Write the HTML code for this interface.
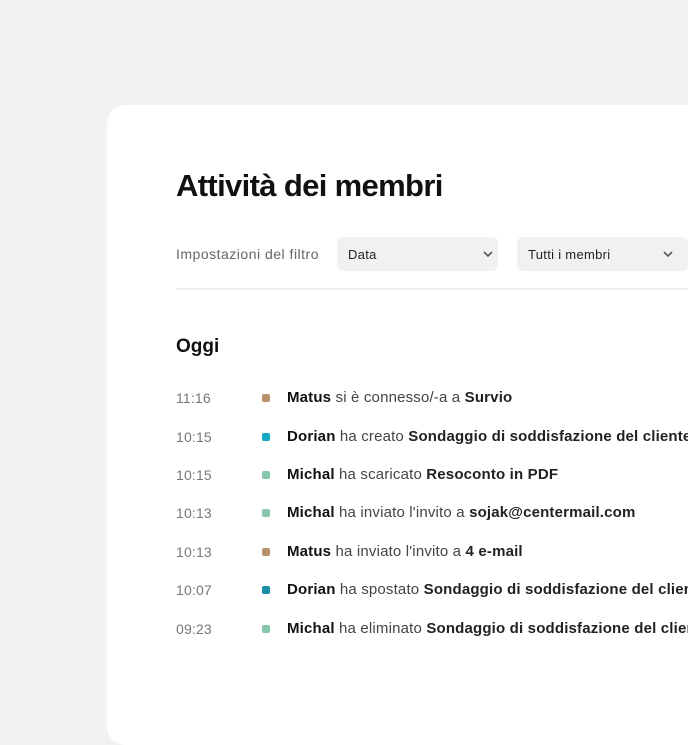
<!DOCTYPE html>
<html><head><meta charset="utf-8"><style>
body{margin:0;width:688px;height:688px;background:#f1f2f1;overflow:hidden;font-family:"Liberation Sans",Arial,sans-serif;position:relative}
.card{position:absolute;left:107px;top:105px;width:620px;height:640px;background:#fff;border-radius:18px}
h1{position:absolute;left:176px;top:168px;margin:0;font-size:31px;font-weight:700;color:#111;letter-spacing:-0.65px;white-space:nowrap}
.lbl{position:absolute;left:176px;top:246px;font-size:14px;color:#666;letter-spacing:0.5px}
.sel{position:absolute;top:237px;height:34px;background:#f1f1f1;border-radius:6px;font-size:13px;color:#222;line-height:36px;padding-left:11px;box-sizing:border-box;letter-spacing:0.3px}
.sel svg{position:absolute;top:14px}
.hr{position:absolute;left:176px;top:288px;width:520px;height:2px;background:#ececec}
.oggi{position:absolute;left:176px;top:336px;font-size:19px;font-weight:700;color:#111}
.row{position:absolute;left:176px;font-size:15px;color:#444;white-space:nowrap;letter-spacing:0.17px}
.row .t{position:absolute;left:0;top:1px;font-size:14px;color:#777}
.row .d{position:absolute;left:86px;top:5px;width:8px;height:8px;border-radius:2px}
.row .x{position:absolute;left:111px;top:0}
b{color:#222}
.row b:first-child{color:#111}
</style></head><body>
<div class="card"></div>
<h1>Attività dei membri</h1>
<div class="lbl">Impostazioni del filtro</div>
<div class="sel" style="left:337px;width:161px">Data<svg style="left:146px" width="10" height="7" viewBox="0 0 10 7"><path d="M1 1l4 4 4-4" fill="none" stroke="#555" stroke-width="1.6"/></svg></div>
<div class="sel" style="left:517px;width:171px">Tutti i membri<svg style="left:146px" width="10" height="7" viewBox="0 0 10 7"><path d="M1 1l4 4 4-4" fill="none" stroke="#555" stroke-width="1.6"/></svg></div>
<div class="hr"></div>
<div class="oggi">Oggi</div>
<div class="row" style="top:389px"><span class="t">11:16</span><span class="d" style="background:#b8916a"></span><span class="x"><b>Matus</b> si è connesso/-a a <b>Survio</b></span></div>
<div class="row" style="top:428px"><span class="t">10:15</span><span class="d" style="background:#16a9c6"></span><span class="x"><b>Dorian</b> ha creato <b>Sondaggio di soddisfazione del cliente</b></span></div>
<div class="row" style="top:466px"><span class="t">10:15</span><span class="d" style="background:#86c6aa"></span><span class="x"><b>Michal</b> ha scaricato <b>Resoconto in PDF</b></span></div>
<div class="row" style="top:504px"><span class="t">10:13</span><span class="d" style="background:#86c6aa"></span><span class="x"><b>Michal</b> ha inviato l'invito a <b>sojak@centermail.com</b></span></div>
<div class="row" style="top:543px"><span class="t">10:13</span><span class="d" style="background:#b8916a"></span><span class="x"><b>Matus</b> ha inviato l'invito a <b>4 e-mail</b></span></div>
<div class="row" style="top:581px"><span class="t">10:07</span><span class="d" style="background:#1a8ca3"></span><span class="x"><b>Dorian</b> ha spostato <b>Sondaggio di soddisfazione del cliente</b></span></div>
<div class="row" style="top:620px"><span class="t">09:23</span><span class="d" style="background:#86c6aa"></span><span class="x"><b>Michal</b> ha eliminato <b>Sondaggio di soddisfazione del cliente</b></span></div>
</body></html>
